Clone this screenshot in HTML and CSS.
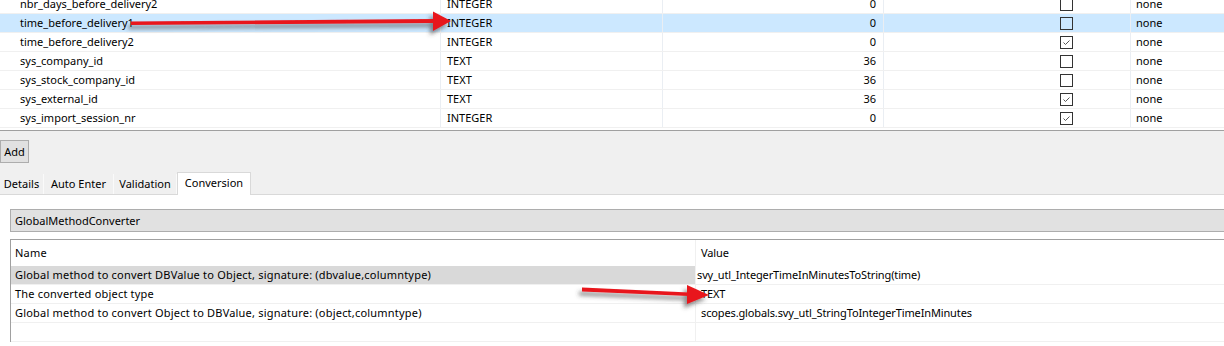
FILE: index.html
```html
<!DOCTYPE html>
<html lang="en">
<head>
    <meta charset="UTF-8">
    <title>Column Conversion</title>
    <link rel="stylesheet" href="styles.css">
</head>
<body>
<div class="page">
    <div class="columns">
        <div class="row">
            <div class="cell name">nbr_days_before_delivery2</div>
            <div class="cell type">INTEGER</div>
            <div class="cell len">0</div>
            <div class="cell extra"></div>
            <div class="cell flag"><span class="check"></span></div>
            <div class="cell conv">none</div>
        </div>
        <div class="row selected">
            <div class="cell name">time_before_delivery1</div>
            <div class="cell type">INTEGER</div>
            <div class="cell len">0</div>
            <div class="cell extra"></div>
            <div class="cell flag"><span class="check"></span></div>
            <div class="cell conv">none</div>
        </div>
        <div class="row">
            <div class="cell name">time_before_delivery2</div>
            <div class="cell type">INTEGER</div>
            <div class="cell len">0</div>
            <div class="cell extra"></div>
            <div class="cell flag"><span class="check checked"><svg width="11" height="11" viewBox="0 0 11 11"><polyline points="2.5,5.5 4.5,7.5 8.5,3.5" fill="none" stroke="#555" stroke-width="1"/></svg></span></div>
            <div class="cell conv">none</div>
        </div>
        <div class="row">
            <div class="cell name">sys_company_id</div>
            <div class="cell type">TEXT</div>
            <div class="cell len">36</div>
            <div class="cell extra"></div>
            <div class="cell flag"><span class="check"></span></div>
            <div class="cell conv">none</div>
        </div>
        <div class="row">
            <div class="cell name">sys_stock_company_id</div>
            <div class="cell type">TEXT</div>
            <div class="cell len">36</div>
            <div class="cell extra"></div>
            <div class="cell flag"><span class="check"></span></div>
            <div class="cell conv">none</div>
        </div>
        <div class="row">
            <div class="cell name">sys_external_id</div>
            <div class="cell type">TEXT</div>
            <div class="cell len">36</div>
            <div class="cell extra"></div>
            <div class="cell flag"><span class="check checked"><svg width="11" height="11" viewBox="0 0 11 11"><polyline points="2.5,5.5 4.5,7.5 8.5,3.5" fill="none" stroke="#555" stroke-width="1"/></svg></span></div>
            <div class="cell conv">none</div>
        </div>
        <div class="row">
            <div class="cell name">sys_import_session_nr</div>
            <div class="cell type">INTEGER</div>
            <div class="cell len">0</div>
            <div class="cell extra"></div>
            <div class="cell flag"><span class="check checked"><svg width="11" height="11" viewBox="0 0 11 11"><polyline points="2.5,5.5 4.5,7.5 8.5,3.5" fill="none" stroke="#555" stroke-width="1"/></svg></span></div>
            <div class="cell conv">none</div>
        </div>
    </div>

    <div class="toolbar">
        <button class="add-btn">Add</button>
        <div class="tabs">
            <div class="tab tab-details">Details</div>
            <div class="tab tab-auto">Auto Enter</div>
            <div class="tab tab-valid">Validation</div>
            <div class="tab tab-conv active">Conversion</div>
        </div>
    </div>

    <div class="tab-body">
        <div class="converter">GlobalMethodConverter</div>
        <div class="props">
            <div class="prow head">
                <div class="pcell pname">Name</div>
                <div class="pcell pvalue">Value</div>
            </div>
            <div class="prow">
                <div class="pcell pname hl">Global method to convert DBValue to Object, signature: (dbvalue,columntype)</div>
                <div class="pcell pvalue editing">svy_utl_IntegerTimeInMinutesToString(time)</div>
            </div>
            <div class="prow">
                <div class="pcell pname">The converted object type</div>
                <div class="pcell pvalue">TEXT</div>
            </div>
            <div class="prow">
                <div class="pcell pname">Global method to convert Object to DBValue, signature: (object,columntype)</div>
                <div class="pcell pvalue">scopes.globals.svy_utl_StringToIntegerTimeInMinutes</div>
            </div>
            <div class="prow">
                <div class="pcell pname"></div>
                <div class="pcell pvalue"></div>
            </div>
        </div>
    </div>

    <!-- annotation arrows drawn over the screenshot -->
    <svg class="arrows" width="1224" height="346" viewBox="0 0 1224 346">
        <defs>
            <filter id="shadow" x="-10%" y="-50%" width="120%" height="200%">
                <feDropShadow dx="-3" dy="4" stdDeviation="2" flood-color="#404040" flood-opacity="0.6"/>
            </filter>
        </defs>
        <g filter="url(#shadow)" fill="#e8141b" stroke="none">
            <polygon points="131,21.5 434,19 434,23 131,25"/>
            <polygon points="433,11.5 451,21 433,31"/>
            <polygon points="582,287.5 689,292.5 689,296 582,291.5"/>
            <polygon points="687,285 709,295 687,304"/>
        </g>
    </svg>
</div>
</body>
</html>
```

FILE: styles.css
```css
body {
    margin: 0;
    font-family: "Noto Sans", "Open Sans", sans-serif;
    font-size: 11px;
    color: #000;
    background: #fff;
}
.page {
    position: relative;
    width: 1224px;
    height: 346px;
    overflow: hidden;
}

/* columns grid */
.columns {
    margin-top: -5px;
    padding-bottom: 2px;
    border-bottom: 1px solid #a0a0a0;
}
.row {
    display: grid;
    grid-template-columns: 441px 222px 221px 119px 128px 1fr;
    height: 19px;
    box-sizing: border-box;
    border-bottom: 1px solid #f0f0f0;
}
.row.selected {
    background-color: #cce8ff;
}
.cell {
    line-height: 18px;
    white-space: nowrap;
    overflow: hidden;
    box-sizing: border-box;
}
.name, .type, .len, .flag {
    border-right: 1px solid #eaeef3;
}
.name {
    padding-left: 20px;
}
.type {
    padding-left: 6px;
}
.len {
    text-align: right;
    padding-right: 7px;
}
.flag {
    display: flex;
    align-items: center;
    justify-content: center;
}
.conv {
    padding-left: 5px;
}
.check {
    display: flex;
    align-items: center;
    justify-content: center;
    width: 13px;
    height: 13px;
    box-sizing: border-box;
    border: 1px solid #333;
    background: #fff;
}
.row.selected .check {
    background: transparent;
}

/* toolbar + tabs */
.toolbar {
    background-color: #f0f0f0;
    padding-top: 9px;
}
.add-btn {
    display: block;
    width: 29px;
    height: 23px;
    padding: 0;
    margin: 0;
    font: inherit;
    color: #000;
    background: #e1e1e1;
    border: 1px solid #adadad;
}
.tabs {
    display: flex;
    align-items: flex-end;
    height: 22px;
    margin-top: 9px;
    border-bottom: 1px solid #d9d9d9;
}
.tab {
    height: 20px;
    line-height: 19px;
    text-align: center;
    box-sizing: border-box;
    border-right: 1px solid #fafafa;
}
.tab-details { width: 44px; }
.tab-auto { width: 70px; }
.tab-valid { width: 63px; }
.tab-conv { width: 74px; }
.tab.active {
    height: 23px;
    line-height: 19px;
    margin-bottom: -1px;
    background: #fff;
    border: 1px solid #d9d9d9;
    border-bottom: none;
}

/* conversion tab body */
.tab-body {
    padding: 14px 0 0 10px;
}
.converter {
    height: 23px;
    box-sizing: border-box;
    line-height: 21px;
    padding-left: 4px;
    background: #e1e1e1;
    border: 1px solid #adadad;
    border-right: none;
}
.props {
    margin-top: 7px;
    border-top: 1px solid #a0a0a0;
    border-left: 1px solid #a0a0a0;
}
.prow {
    display: grid;
    grid-template-columns: 685px 1fr;
    height: 19px;
    box-sizing: border-box;
    border-bottom: 1px solid #f0f0f0;
}
.prow.head {
    height: 26px;
    border-bottom: none;
}
.pcell {
    line-height: 18px;
    white-space: nowrap;
    overflow: hidden;
}
.prow.head .pcell {
    line-height: 26px;
}
.pname {
    padding-left: 4px;
    letter-spacing: 0.2px;
    border-right: 1px solid #f0f0f0;
}
.pvalue {
    padding-left: 5px;
    letter-spacing: -0.13px;
}
.pvalue.editing {
    padding-left: 1px;
}
.hl {
    background-color: #d9d9d9;
}

.arrows {
    position: absolute;
    left: 0;
    top: 0;
    pointer-events: none;
}
```
